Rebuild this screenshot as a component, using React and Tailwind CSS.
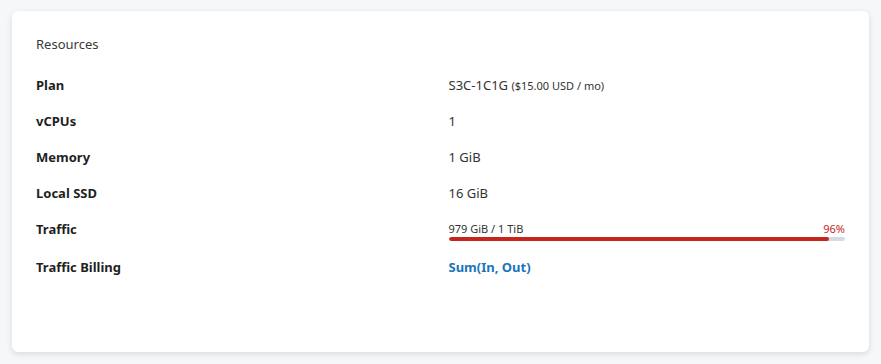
import React from 'react';

const rows = [
  { label: 'Plan', value: <span>S3C-1C1G <span className="text-[11px]">($15.00 USD / mo)</span></span> },
  { label: 'vCPUs', value: '1' },
  { label: 'Memory', value: '1 GiB' },
  { label: 'Local SSD', value: '16 GiB' },
];

function TrafficBar({ used, total, pct }) {
  return (
    <div className="flex flex-col">
      <div className="flex justify-between text-[11px] leading-[14px]">
        <span className="text-[#333]">{used} / {total}</span>
        <span className="text-[#c4261d]">{pct}%</span>
      </div>
      <div className="mt-[1px] h-[4px] w-full rounded-full bg-[#d5dbe5] overflow-hidden">
        <div className="h-full rounded-full bg-[#c4261d]" style={{ width: `${pct}%` }} />
      </div>
    </div>
  );
}

export default function App() {
  return (
    <div className="min-h-[364px] bg-[#f6f7f9] px-3 pt-[11px] pb-3" style={{ fontFamily: '"Noto Sans", "Open Sans", sans-serif' }}>
      <div className="h-[341px] rounded-md bg-white px-6 pt-[24px] shadow-[0_2px_6px_rgba(0,0,0,0.12)]">
        <h2 className="text-[13px] leading-[18px] text-[#3a3a3a]">Resources</h2>

        <div className="mt-[15px]">
          {rows.map((r) => (
            <div key={r.label} className="grid h-9 grid-cols-2 items-center gap-x-4 text-[13px]">
              <span className="font-bold text-[#1f1f1f]">{r.label}</span>
              <span className="text-[#333]">{r.value}</span>
            </div>
          ))}

          <div className="grid h-[38px] grid-cols-2 items-start gap-x-4 text-[13px]">
            <span className="pt-[8px] leading-[18px] font-bold text-[#1f1f1f]">Traffic</span>
            <div className="pt-[10px]">
              <TrafficBar used="979 GiB" total="1 TiB" pct={96} />
            </div>
          </div>

          <div className="grid h-9 grid-cols-2 items-center gap-x-4 text-[13px]">
            <span className="font-bold text-[#1f1f1f]">Traffic Billing</span>
            <span className="font-bold text-[#1b75bb]">Sum(In, Out)</span>
          </div>
        </div>
      </div>
    </div>
  );
}
